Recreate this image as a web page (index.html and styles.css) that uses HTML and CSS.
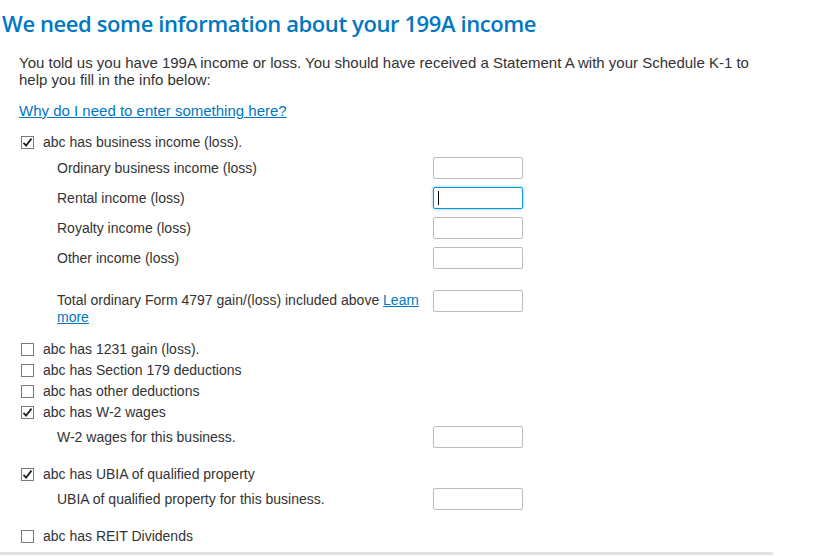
FILE: index.html
```html
<!DOCTYPE html>
<html lang="en">
<head>
    <meta charset="UTF-8" />
    <meta name="viewport" content="width=device-width, initial-scale=1" />
    <title>199A income</title>

    <link rel="stylesheet" href="styles.css">

</head>
<body>

    <h1 class="title">We need some information about your 199A income</h1>

    <div class="content">
        <p class="intro">You told us you have 199A income or loss. You should have received a Statement A with your Schedule K-1 to help you fill in the info below:</p>

        <p class="help"><a href="#">Why do I need to enter something here?</a></p>

        <!-- Business income -->
        <div class="group">
            <div class="check-row">
                <span class="box checked"><svg width="11" height="11" viewBox="0 0 11 11"><path d="M1.5 5.8l2.6 2.8 5.4-7" stroke="#222" stroke-width="1.8" fill="none"/></svg></span>
                <span>abc has business income (loss).</span>
            </div>
            <div class="sub">
                <div class="sub-row">
                    <label>Ordinary business income (loss)</label>
                    <span class="field"></span>
                </div>
                <div class="sub-row">
                    <label>Rental income (loss)</label>
                    <span class="field focus"><span class="caret"></span></span>
                </div>
                <div class="sub-row">
                    <label>Royalty income (loss)</label>
                    <span class="field"></span>
                </div>
                <div class="sub-row">
                    <label>Other income (loss)</label>
                    <span class="field"></span>
                </div>
                <div class="sub-row tall">
                    <label>Total ordinary Form 4797 gain/(loss) included above <a href="#">Learn more</a></label>
                    <span class="field"></span>
                </div>
            </div>
        </div>

        <div class="check-row">
            <span class="box"></span>
            <span>abc has 1231 gain (loss).</span>
        </div>
        <div class="check-row">
            <span class="box"></span>
            <span>abc has Section 179 deductions</span>
        </div>
        <div class="check-row">
            <span class="box"></span>
            <span>abc has other deductions</span>
        </div>

        <!-- W-2 -->
        <div class="group">
            <div class="check-row">
                <span class="box checked"><svg width="11" height="11" viewBox="0 0 11 11"><path d="M1.5 5.8l2.6 2.8 5.4-7" stroke="#222" stroke-width="1.8" fill="none"/></svg></span>
                <span>abc has W-2 wages</span>
            </div>
            <div class="sub short">
                <div class="sub-row">
                    <label>W-2 wages for this business.</label>
                    <span class="field"></span>
                </div>
            </div>
        </div>

        <!-- UBIA -->
        <div class="group">
            <div class="check-row">
                <span class="box checked"><svg width="11" height="11" viewBox="0 0 11 11"><path d="M1.5 5.8l2.6 2.8 5.4-7" stroke="#222" stroke-width="1.8" fill="none"/></svg></span>
                <span>abc has UBIA of qualified property</span>
            </div>
            <div class="sub short">
                <div class="sub-row">
                    <label>UBIA of qualified property for this business.</label>
                    <span class="field"></span>
                </div>
            </div>
        </div>

        <div class="check-row">
            <span class="box"></span>
            <span>abc has REIT Dividends</span>
        </div>
    </div>

    <div class="bottom-line"></div>

</body>
</html>
```

FILE: styles.css
```css
body {
  font-family: 'Liberation Sans', Arial, sans-serif;
  font-size: 14px;
  line-height: 17px;
  color: #333;
  background: #fff;
  margin: 0;
  padding: 0;
}

a {
  color: #0077c5;
  text-decoration: underline;
}

.title {
  font-family: 'Open Sans', sans-serif;
  font-weight: 600;
  font-size: 22px;
  line-height: 30px;
  letter-spacing: -0.4px;
  color: #0077c5;
  margin: 0;
  padding: 8px 0 0 2px;
}

.content {
  padding: 0 19px;
  width: 740px;
}

.intro {
  font-size: 15px;
  margin: 16px 0 0;
}

.help {
  font-size: 15px;
  margin: 14px 0 13px;
}

/* Checkbox rows */
.check-row {
  display: flex;
  align-items: center;
  height: 21px;
  gap: 9px;
}
.box {
  width: 11px;
  height: 11px;
  border: 1px solid #7a7a7a;
  background: #fff;
  margin-left: 2px;
  display: flex;
  align-items: center;
  justify-content: center;
  flex-shrink: 0;
}

/* Sub fields */
.sub {
  padding: 0 0 12px 38px;
}
.sub.short {
  margin-top: -1px;
}
.sub-row {
  display: grid;
  grid-template-columns: 376px 90px;
  align-items: center;
  height: 30px;
}
.sub-row label {
  padding-right: 8px;
}
.sub-row.tall {
  height: auto;
  align-items: start;
  margin-top: 13px;
  padding: 4px 0 1px;
}
.sub-row.tall label {
  padding-top: 2px;
}

.field {
  display: block;
  width: 88px;
  height: 20px;
  border: 1px solid #bcbcbc;
  border-radius: 2px;
  background: #fff;
  position: relative;
}
.field.focus {
  border-color: #0a97d9;
  box-shadow: 0 0 3px rgba(10, 151, 217, 0.6);
}
.caret {
  position: absolute;
  left: 4px;
  top: 3px;
  width: 1px;
  height: 14px;
  background: #000;
}

.bottom-line {
  width: 773px;
  height: 3px;
  background: #e3e3e3;
  margin-top: 5px;
}
```
